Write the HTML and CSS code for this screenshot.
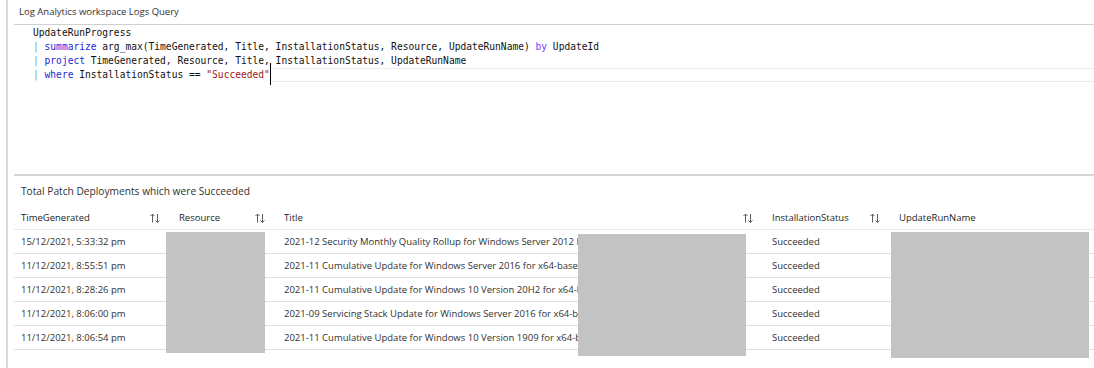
FILE: index.html
```html
<!DOCTYPE html>
<html lang="en">
<head>
    <meta charset="UTF-8">
    <title>Log Analytics workspace Logs Query</title>
    <link rel="stylesheet" href="styles.css">
</head>
<body>
    <div class="frame">
        <div class="panel-title">Log Analytics workspace Logs Query</div>

        <div class="editor">
            <div class="code-line">UpdateRunProgress</div>
            <div class="code-line"><span class="pipe">|</span> <span class="kw">summarize</span> arg_max(TimeGenerated, Title, InstallationStatus, Resource, UpdateRunName) <span class="kw-by">by</span> UpdateId</div>
            <div class="code-line"><span class="pipe">|</span> <span class="kw">project</span> TimeGenerated, Resource, Title, InstallationStatus, UpdateRunName</div>
            <div class="code-line current"><span class="pipe">|</span>&nbsp;<span class="kw">where</span>&nbsp;InstallationStatus&nbsp;==&nbsp;<span class="str">"Succeeded"</span><span class="cursor"></span><span class="line-highlight"></span></div>
        </div>

        <div class="results">
            <div class="results-title">Total Patch Deployments which were Succeeded</div>

            <div class="grid">
                <div class="row header">
                    <div class="cell">TimeGenerated <svg class="sort" viewBox="0 0 10 10"><path d="M2.5 9.5V1M0.5 3L2.5 1L4.5 3M7.5 1V9.5M5.5 7.5L7.5 9.5L9.5 7.5"/></svg></div>
                    <div class="cell">Resource <svg class="sort" viewBox="0 0 10 10"><path d="M2.5 9.5V1M0.5 3L2.5 1L4.5 3M7.5 1V9.5M5.5 7.5L7.5 9.5L9.5 7.5"/></svg></div>
                    <div class="cell">Title <svg class="sort" viewBox="0 0 10 10"><path d="M2.5 9.5V1M0.5 3L2.5 1L4.5 3M7.5 1V9.5M5.5 7.5L7.5 9.5L9.5 7.5"/></svg></div>
                    <div class="cell">InstallationStatus <svg class="sort" viewBox="0 0 10 10"><path d="M2.5 9.5V1M0.5 3L2.5 1L4.5 3M7.5 1V9.5M5.5 7.5L7.5 9.5L9.5 7.5"/></svg></div>
                    <div class="cell">UpdateRunName</div>
                </div>

                <div class="row">
                    <div class="cell">15/12/2021, 5:33:32 pm</div>
                    <div class="cell"></div>
                    <div class="cell">2021-12 Security Monthly Quality Rollup for Windows Server 2012 R2 for x64-based Systems</div>
                    <div class="cell">Succeeded</div>
                    <div class="cell"></div>
                </div>
                <div class="row">
                    <div class="cell">11/12/2021, 8:55:51 pm</div>
                    <div class="cell"></div>
                    <div class="cell">2021-11 Cumulative Update for Windows Server 2016 for x64-based Systems</div>
                    <div class="cell">Succeeded</div>
                    <div class="cell"></div>
                </div>
                <div class="row">
                    <div class="cell">11/12/2021, 8:28:26 pm</div>
                    <div class="cell"></div>
                    <div class="cell">2021-11 Cumulative Update for Windows 10 Version 20H2 for x64-based Systems</div>
                    <div class="cell">Succeeded</div>
                    <div class="cell"></div>
                </div>
                <div class="row">
                    <div class="cell">11/12/2021, 8:06:00 pm</div>
                    <div class="cell"></div>
                    <div class="cell">2021-09 Servicing Stack Update for Windows Server 2016 for x64-based Systems</div>
                    <div class="cell">Succeeded</div>
                    <div class="cell"></div>
                </div>
                <div class="row">
                    <div class="cell">11/12/2021, 8:06:54 pm</div>
                    <div class="cell"></div>
                    <div class="cell">2021-11 Cumulative Update for Windows 10 Version 1909 for x64-based Systems</div>
                    <div class="cell">Succeeded</div>
                    <div class="cell"></div>
                </div>

                <!-- redacted values -->
                <div class="redact redact-resource"></div>
                <div class="redact redact-title"></div>
                <div class="redact redact-run"></div>
            </div>
        </div>
    </div>
</body>
</html>
```

FILE: styles.css
```css
:root {
    --text: #323130;
    --line: #d2d0ce;
    --row-line: #e1dfdd;
    --redact: #c3c3c3;
}

* {
    margin: 0;
    padding: 0;
    box-sizing: border-box;
}

body {
    font-family: 'Open Sans', 'Noto Sans', sans-serif;
    color: var(--text);
    background: #fff;
    width: 1094px;
    height: 368px;
    overflow: hidden;
}

.frame {
    margin-left: 6px;
    border-left: 2px solid #d8d8d8;
    height: 368px;
}

.panel-title {
    height: 24px;
    line-height: 24px;
    padding-left: 11px;
    font-size: 9.5px;
}

/* query editor */
.editor {
    margin-left: 6px;
    border-top: 1px solid #d0d0d0;
    padding: 1px 0 0 19px;
    height: 150px;
    font-family: 'DejaVu Sans Mono', 'Liberation Mono', monospace;
    font-size: 9.6px;
    color: #111;
}

.code-line {
    height: 14px;
    line-height: 14px;
    white-space: pre;
}

.code-line.current {
    display: flex;
    align-items: stretch;
}

.pipe {
    color: #6e9fd6;
}

.kw {
    color: #1f1fd6;
}

.kw-by {
    color: #7a3cff;
}

.str {
    color: #a31515;
}

.cursor {
    width: 1px;
    margin: -5px 1px -3px 0;
    background: #000;
}

.line-highlight {
    flex: 1;
    border-top: 1px solid #ececec;
    border-bottom: 1px solid #ececec;
}

/* results */
.results {
    margin-left: 6px;
    border-top: 2px solid #d6d6d6;
}

.results-title {
    height: 30px;
    line-height: 30px;
    padding-left: 7px;
    font-size: 10.2px;
}

.grid {
    position: relative;
    font-size: 9.5px;
}

.row {
    display: grid;
    grid-template-columns: 158px 105px 488px 127px 1fr;
    height: 24px;
    border-bottom: 1px solid var(--row-line);
}

.row.header {
    border-bottom-color: #eceae8;
    color: #201f1e;
}

.cell {
    display: flex;
    align-items: center;
    justify-content: space-between;
    padding: 0 7px;
    white-space: nowrap;
    overflow: hidden;
}

.row:not(.header) .cell {
    display: block;
    line-height: 24px;
}

.sort {
    width: 10px;
    height: 10px;
    margin-right: 5px;
    flex-shrink: 0;
    fill: none;
    stroke: #605e5c;
    stroke-width: 1;
}

.redact {
    position: absolute;
    background: var(--redact);
}

.redact-resource {
    left: 152px;
    top: 26px;
    width: 99px;
    height: 121px;
}

.redact-title {
    left: 564px;
    top: 28px;
    width: 168px;
    height: 122px;
}

.redact-run {
    left: 877px;
    top: 26px;
    width: 198px;
    height: 126px;
}
```
